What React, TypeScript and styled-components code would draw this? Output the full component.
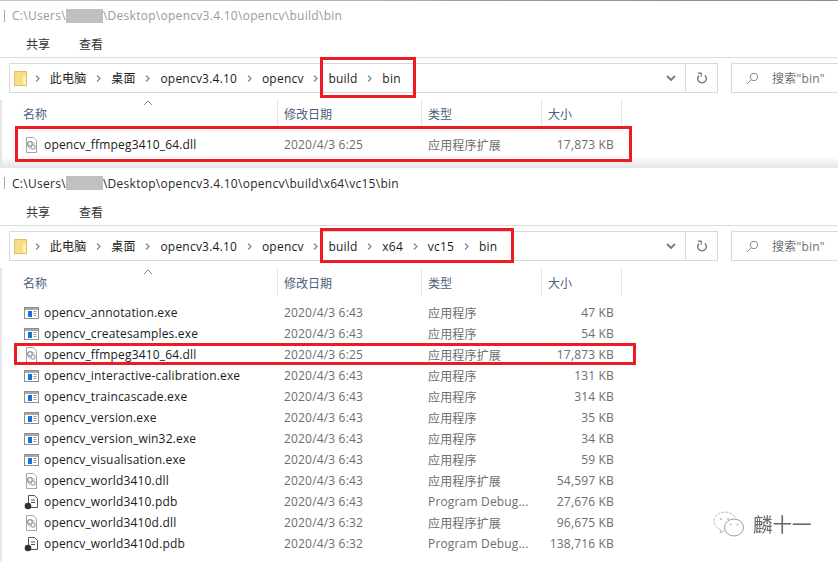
import React from "react";
import styled, { createGlobalStyle } from "styled-components";

const Global = createGlobalStyle`
  html, body { margin: 0; padding: 0; background: #fff; }
  body { width: 838px; height: 561px; overflow: hidden; font-family: "Open Sans", "Noto Sans CJK SC", sans-serif; }
`;

const Page = styled.div`
  position: relative;
  width: 838px;
  height: 561px;
  overflow: hidden;
  background: #fff;
`;

const TopEdge = styled.div`
  height: 1px;
  background: linear-gradient(90deg, #c8c8c8 0, #b0b0b0 45%, #999 60%, #8a8a8a 100%);
`;

const Win = styled.section<{ $h: number }>`
  position: relative;
  height: ${(p) => p.$h}px;
  overflow: hidden;
`;

const TitleRow = styled.div<{ $dim?: boolean; $h: number }>`
  height: ${(p) => p.$h}px;
  display: flex;
  align-items: center;
  padding-left: 4px;
  font-size: 12px;
  letter-spacing: 0.28px;
  color: ${(p) => (p.$dim ? "#9a9a9a" : "#2a2a2a")};
  white-space: nowrap;
`;

const TitleTick = styled.span`
  width: 1px;
  height: 12px;
  background: #a8a8a8;
  margin-right: 7px;
`;

const Redact = styled.span`
  display: inline-block;
  width: 37px;
  height: 14px;
  background: #c0c0c0;
`;

const Tabs = styled.div`
  height: 27px;
  display: flex;
  align-items: center;
  padding-left: 26px;
  gap: 29px;
  font-size: 12px;
  color: #333;
  border-bottom: 1px solid #dcdcdc;
  font-family: "Noto Sans CJK SC", sans-serif;
`;

const NavRow = styled.div`
  display: flex;
  height: 30px;
  margin-top: 5px;
  padding-left: 9px;
`;

const AddressBar = styled.div`
  width: 709px;
  box-sizing: border-box;
  border: 1px solid #d9d9d9;
  display: flex;
  align-items: center;
  padding-left: 4px;
  font-size: 12px;
  letter-spacing: 0.22px;
  color: #1c1c1c;
`;

const Crumb = styled.span`
  display: inline-flex;
  align-items: center;
  white-space: nowrap;
`;

const Chevron = styled.svg`
  width: 7px;
  height: 9px;
  margin: 0 9px 0 8.750px;
  flex: none;
`;

const Spacer = styled.div`
  flex: 1;
`;

const DropArrow = styled.svg`
  width: 10px;
  height: 7px;
  margin-right: 9px;
`;

const RefreshBox = styled.div`
  width: 31px;
  height: 100%;
  border-left: 1px solid #d9d9d9;
  display: flex;
  align-items: center;
  justify-content: center;
`;

const SearchBox = styled.div`
  width: 107px;
  margin-left: 13px;
  box-sizing: border-box;
  border: 1px solid #d9d9d9;
  border-right: none;
  display: flex;
  align-items: center;
  padding-left: 14px;
  gap: 13px;
  font-size: 12px;
  letter-spacing: 0.2px;
  color: #6f6f6f;
  white-space: nowrap;
`;

const Columns = styled.div`
  display: grid;
  grid-template-columns: 278px 144px 120px 80px;
`;

const HeaderRow = styled(Columns)<{ $gap: number }>`
  position: relative;
  height: 27px;
  margin-top: ${(p) => p.$gap}px;
`;

const HeaderCell = styled.div<{ $first?: boolean }>`
  display: flex;
  align-items: center;
  height: 27px;
  padding-left: ${(p) => (p.$first ? 23 : 6)}px;
  border-right: 1px solid #e3e3e3;
  font-size: 12px;
  color: #4c607a;
  font-family: "Noto Sans CJK SC", sans-serif;
`;

const SortCaret = styled.svg`
  position: absolute;
  left: 143px;
  top: 0;
  width: 10px;
  height: 6px;
`;

const Rows = styled.div<{ $pad: number }>`
  padding-top: ${(p) => p.$pad}px;
`;

const Row = styled(Columns)`
  height: 21px;
  align-items: center;
  font-size: 12px;
  letter-spacing: 0.17px;
`;

const NameCell = styled.div`
  display: flex;
  align-items: center;
  padding-left: 24px;
  gap: 5px;
  color: #1a1a1a;
  white-space: nowrap;
`;

const IconSlot = styled.svg`
  width: 15px;
  height: 16px;
  flex: none;
`;

const FolderSvg = styled.svg`
  width: 13px;
  height: 16px;
  flex: none;
  margin-right: -2px;
`;

const MetaCell = styled.div`
  padding-left: 6px;
  color: #6d6d6d;
  white-space: nowrap;
`;

const SizeCell = styled.div`
  padding-right: 8px;
  text-align: right;
  color: #6d6d6d;
  white-space: nowrap;
`;

const RedFrame = styled.div<{ $x: number; $y: number; $w: number; $h: number }>`
  position: absolute;
  left: ${(p) => p.$x}px;
  top: ${(p) => p.$y}px;
  width: ${(p) => p.$w}px;
  height: ${(p) => p.$h}px;
  box-sizing: border-box;
  border: 3px solid #ed1c24;
  pointer-events: none;
`;

const Fade = styled.div`
  position: absolute;
  left: 0;
  right: 0;
  bottom: 0;
  height: 12px;
  background: linear-gradient(180deg, #ffffff 0, #e4e4e4 100%);
`;

const SideBar = styled.div<{ $top: number; $h: number }>`
  position: absolute;
  left: 0;
  top: ${(p) => p.$top}px;
  width: 2px;
  height: ${(p) => p.$h}px;
  background: #e6e6e6;
`;

const Watermark = styled.div`
  position: absolute;
  left: 713px;
  top: 511px;
  display: flex;
  align-items: center;
  gap: 8px;
  font-family: "Noto Sans CJK SC", sans-serif;
  font-size: 19.500px;
  line-height: 26px;
  color: #666;
  filter: blur(0.4px);
`;

const FolderIcon = () => (
  <FolderSvg viewBox="0 0 13 16">
    <path d="M.5 1.500h12v14H.5z" fill="#f8dc86" stroke="#e3be5c" />
    <rect x="9" y="6" width="3" height="9" fill="#fdeeb6" />
  </FolderSvg>
);

const Chev = () => (
  <Chevron viewBox="0 0 7 9">
    <path d="M2 1.500l3 3-3 3" fill="none" stroke="#8a8a8a" strokeWidth="1.300" />
  </Chevron>
);

const ExeIcon = () => (
  <IconSlot viewBox="0 0 15 16">
    <rect x=".5" y="2.500" width="14" height="11" fill="#fff" stroke="#8f8f8f" />
    <rect x="1" y="3" width="13" height="2" fill="#a8a8a8" />
    <rect x="4" y="6" width="4" height="6" fill="#1673d6" />
    <path d="M9.500 6.500h3M9.500 8.500h3M9.500 10.500h3" stroke="#9a9a9a" />
  </IconSlot>
);

const DllIcon = () => (
  <IconSlot viewBox="0 0 15 16">
    <path d="M2.500.5h7l3 3v12h-10z" fill="#fff" stroke="#a5a5a5" />
    <circle cx="6" cy="7" r="2.400" fill="none" stroke="#8d9aa5" strokeWidth="1.400" />
    <circle cx="9" cy="10" r="2.100" fill="none" stroke="#a5adb5" strokeWidth="1.300" />
    <path d="M4 10l2 2M9 5l2 2" stroke="#b5bcc3" />
  </IconSlot>
);

const PdbIcon = () => (
  <IconSlot viewBox="0 0 15 16">
    <path d="M4.500 1.500h6l3 3v9h-9z" fill="#fff" stroke="#555" />
    <path d="M7 6h4M7 8.500h4" stroke="#555" />
    <circle cx="4" cy="12" r="3.300" fill="#333" />
  </IconSlot>
);

const icons = { exe: ExeIcon, dll: DllIcon, pdb: PdbIcon };
type Kind = keyof typeof icons;

type Item = { name: string; time: string; type: string; size: string; kind: Kind };

const EXE = "应用程序";
const DLL = "应用程序扩展";
const PDB = "Program Debug...";

const files: Item[] = [
  { name: "opencv_annotation.exe", time: "2020/4/3 6:43", type: EXE, size: "47 KB", kind: "exe" },
  { name: "opencv_createsamples.exe", time: "2020/4/3 6:43", type: EXE, size: "54 KB", kind: "exe" },
  { name: "opencv_ffmpeg3410_64.dll", time: "2020/4/3 6:25", type: DLL, size: "17,873 KB", kind: "dll" },
  { name: "opencv_interactive-calibration.exe", time: "2020/4/3 6:43", type: EXE, size: "131 KB", kind: "exe" },
  { name: "opencv_traincascade.exe", time: "2020/4/3 6:43", type: EXE, size: "314 KB", kind: "exe" },
  { name: "opencv_version.exe", time: "2020/4/3 6:43", type: EXE, size: "35 KB", kind: "exe" },
  { name: "opencv_version_win32.exe", time: "2020/4/3 6:43", type: EXE, size: "34 KB", kind: "exe" },
  { name: "opencv_visualisation.exe", time: "2020/4/3 6:43", type: EXE, size: "59 KB", kind: "exe" },
  { name: "opencv_world3410.dll", time: "2020/4/3 6:43", type: DLL, size: "54,597 KB", kind: "dll" },
  { name: "opencv_world3410.pdb", time: "2020/4/3 6:43", type: PDB, size: "27,676 KB", kind: "pdb" },
  { name: "opencv_world3410d.dll", time: "2020/4/3 6:32", type: DLL, size: "96,675 KB", kind: "dll" },
  { name: "opencv_world3410d.pdb", time: "2020/4/3 6:32", type: PDB, size: "138,716 KB", kind: "pdb" },
];

const FileRow = ({ f }: { f: Item }) => {
  const Icon = icons[f.kind];
  return (
    <Row>
      <NameCell>
        <Icon />
        {f.name}
      </NameCell>
      <MetaCell>{f.time}</MetaCell>
      <MetaCell>{f.type}</MetaCell>
      <SizeCell>{f.size}</SizeCell>
    </Row>
  );
};

const Nav = ({ crumbs, search }: { crumbs: string[]; search: string }) => (
  <NavRow>
    <AddressBar>
      <FolderIcon />
      <Chev />
      {crumbs.map((c, i) => (
        <Crumb key={c}>
          {c}
          {i < crumbs.length - 1 && <Chev />}
        </Crumb>
      ))}
      <Spacer />
      <DropArrow viewBox="0 0 10 7">
        <path d="M1 1l4 4 4-4" fill="none" stroke="#777" strokeWidth="1.800" />
      </DropArrow>
      <RefreshBox>
        <svg width="12" height="13" viewBox="0 0 12 13">
          <path d="M8.800 3.200A4.300 4.300 0 1 1 3 3.400" fill="none" stroke="#777" strokeWidth="1.400" />
          <path d="M1.800 1.200h3.400v3.400" fill="none" stroke="#777" strokeWidth="1.200" />
        </svg>
      </RefreshBox>
    </AddressBar>
    <SearchBox>
      <svg width="13" height="13" viewBox="0 0 13 13">
        <circle cx="8" cy="5" r="3.700" fill="none" stroke="#8a8a8a" />
        <path d="M5.200 7.800L1 12" stroke="#a08a70" />
      </svg>
      {search}
    </SearchBox>
  </NavRow>
);

const Head = ({ gap }: { gap: number }) => (
  <HeaderRow $gap={gap}>
    <SortCaret viewBox="0 0 10 6">
      <path d="M1 5l4-4 4 4" fill="none" stroke="#8a8a8a" />
    </SortCaret>
    <HeaderCell $first>名称</HeaderCell>
    <HeaderCell>修改日期</HeaderCell>
    <HeaderCell>类型</HeaderCell>
    <HeaderCell>大小</HeaderCell>
  </HeaderRow>
);

const Title = ({ dim, h, tail }: { dim?: boolean; h: number; tail: string }) => (
  <TitleRow $dim={dim} $h={h}>
    <TitleTick />
    C:\Users\
    <Redact />
    {tail}
  </TitleRow>
);

export default function App() {
  return (
    <Page>
      <Global />
      <TopEdge />
      <Win $h={167}>
        <Title dim h={29} tail="\Desktop\opencv3.4.10\opencv\build\bin" />
        <Tabs>
          <span>共享</span>
          <span>查看</span>
        </Tabs>
        <Nav crumbs={["此电脑", "桌面", "opencv3.4.10", "opencv", "build", "bin"]} search={'搜索"bin"'} />
        <Head gap={7} />
        <Rows $pad={7}>
          <FileRow f={{ name: "opencv_ffmpeg3410_64.dll", time: "2020/4/3 6:25", type: DLL, size: "17,873 KB", kind: "dll" }} />
        </Rows>
        <Fade />
        <SideBar $top={99} $h={66} />
        <RedFrame $x={320} $y={56} $w={96} $h={41} />
        <RedFrame $x={15} $y={125} $w={617} $h={36} />
      </Win>
      <Win $h={393}>
        <Title h={30} tail="\Desktop\opencv3.4.10\opencv\build\x64\vc15\bin" />
        <Tabs>
          <span>共享</span>
          <span>查看</span>
        </Tabs>
        <Nav crumbs={["此电脑", "桌面", "opencv3.4.10", "opencv", "build", "x64", "vc15", "bin"]} search={'搜索"bin"'} />
        <Head gap={8} />
        <Rows $pad={6}>
          {files.map((f) => (
            <FileRow key={f.name} f={f} />
          ))}
        </Rows>
        <SideBar $top={100} $h={293} />
        <RedFrame $x={320} $y={60} $w={194} $h={35} />
        <RedFrame $x={14} $y={175} $w={622} $h={22} />
      </Win>
      <Watermark>
        <svg width="32" height="26" viewBox="0 0 32 26">
          <path d="M8 19c-4-1.500-7-5-7-9 0-5 5-9 11-9 5 0 9 3 10.500 6" fill="none" stroke="#bbb" strokeDasharray="3 1" />
          <path d="M8 19l-1 3 4-2" fill="none" stroke="#bbb" />
          <ellipse cx="21" cy="16.500" rx="9.500" ry="8.500" fill="none" stroke="#999" />
          <circle cx="17.500" cy="13.500" r="1" fill="#bbb" />
          <circle cx="24.500" cy="13.500" r="1" fill="#bbb" />
          <circle cx="8" cy="8" r="1" fill="#bbb" />
          <circle cx="15" cy="8" r="1" fill="#bbb" />
        </svg>
        <span>麟十一</span>
      </Watermark>
    </Page>
  );
}
